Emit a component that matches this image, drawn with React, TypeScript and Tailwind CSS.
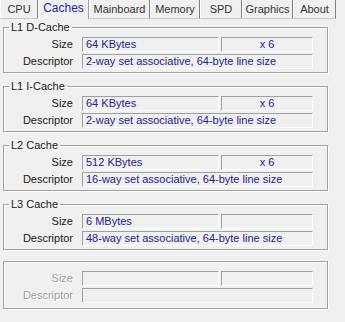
import React from "react";

const tabs = [
  { label: "CPU", w: "w-[38px]" },
  { label: "Caches", w: "w-[51px]", active: true },
  { label: "Mainboard", w: "w-[61px]" },
  { label: "Memory", w: "w-[50px]" },
  { label: "SPD", w: "w-[42px]" },
  { label: "Graphics", w: "w-[51px]" },
  { label: "About", w: "w-[43px]" },
];

type Cache = {
  name?: string;
  size: string;
  count: string;
  desc: string;
};

const caches: Cache[] = [
  { name: "L1 D-Cache", size: "64 KBytes", count: "x 6", desc: "2-way set associative, 64-byte line size" },
  { name: "L1 I-Cache", size: "64 KBytes", count: "x 6", desc: "2-way set associative, 64-byte line size" },
  { name: "L2 Cache", size: "512 KBytes", count: "x 6", desc: "16-way set associative, 64-byte line size" },
  { name: "L3 Cache", size: "6 MBytes", count: "", desc: "48-way set associative, 64-byte line size" },
];

function Field({ w, children, center }: { w: string; children?: React.ReactNode; center?: boolean }) {
  return (
    <div
      className={`${w} h-[15px] border-t border-l border-t-[#a0a0a0] border-l-[#a0a0a0] border-b border-r border-b-white border-r-white bg-[#f0f0f0] text-[#23238c] leading-[13px] whitespace-nowrap overflow-hidden ${
        center ? "text-center" : "pl-[3px]"
      }`}
    >
      {children}
    </div>
  );
}

function Rows({ c, disabled }: { c?: Cache; disabled?: boolean }) {
  const label = disabled
    ? "w-[69px] text-right text-[#a0a0a0] [text-shadow:1px_1px_0_#fff] leading-[15px]"
    : "w-[69px] text-right text-[#1a1a1a] leading-[15px]";
  return (
    <div className="flex flex-col gap-[2px]">
      <div className="flex items-center">
        <div className={label}>Size</div>
        <div className="ml-[9px] flex gap-[2px]">
          <Field w="w-[137px]">{c?.size}</Field>
          <Field w="w-[92px]" center>
            {c?.count}
          </Field>
        </div>
      </div>
      <div className="flex items-center">
        <div className={label}>Descriptor</div>
        <div className="ml-[9px]">
          <Field w="w-[231px]">{c?.desc}</Field>
        </div>
      </div>
    </div>
  );
}

export default function App() {
  return (
    <div className="w-[345px] h-[322px] bg-[#f0f0f0] overflow-hidden font-['Liberation_Sans',Arial,sans-serif] text-[11px] text-[#1a1a1a]">
      {/* tab strip */}
      <div className="flex h-[19px] w-[336px]">
        {tabs.map((t) =>
          t.active ? (
            <div
              key={t.label}
              className={`${t.w} h-[19px] border-l border-l-white border-r border-r-[#a0a0a0] text-[#1f1fb0] text-[12px] text-center leading-[17px]`}
            >
              {t.label}
            </div>
          ) : (
            <div
              key={t.label}
              className={`${t.w} h-[19px] border-l border-l-white border-r border-r-[#808080] border-b border-b-[#c8c8c8] text-center leading-[18px] text-[#333]`}
            >
              {t.label}
            </div>
          )
        )}
      </div>

      <div className="pt-[2px] pl-[3px] flex flex-col">
        {caches.map((c, i) => (
          <fieldset
            key={c.name}
            className={`w-[325px] border border-[#a0a0a0] shadow-[inset_1px_1px_0_#fff,1px_1px_0_#fff] pb-[3px] ${
              i > 0 ? "mt-[7px]" : ""
            }`}
          >
            <legend className="ml-[5px] px-[2px] leading-[13px] text-[#1a1a1a]">{c.name}</legend>
            <div className="pt-[3px]">
              <Rows c={c} />
            </div>
          </fieldset>
        ))}
        <fieldset className="mt-[11px] w-[325px] border border-[#a0a0a0] shadow-[inset_1px_1px_0_#fff,1px_1px_0_#fff] pt-[9px] pb-[5px]">
          <Rows disabled />
        </fieldset>
      </div>
    </div>
  );
}
